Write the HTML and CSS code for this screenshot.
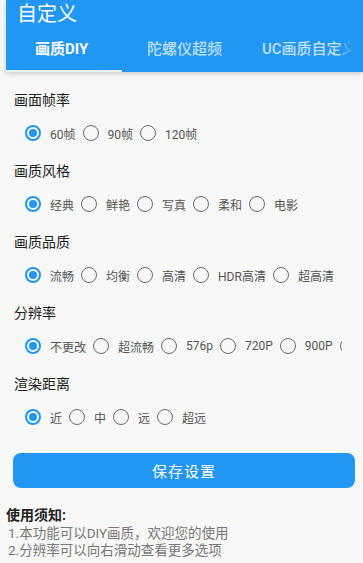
FILE: index.html
```html
<!DOCTYPE html>
<html lang="zh-CN">
<head>
    <meta charset="UTF-8">
    <meta name="viewport" content="width=device-width, initial-scale=1.0">
    <title>自定义</title>
    <link rel="stylesheet" href="styles.css">
</head>
<body>
    <div class="app-header">
        <div class="app-title">自定义</div>
        <div class="tab-bar">
            <div class="tab tab-active">画质DIY</div>
            <div class="tab">陀螺仪超频</div>
            <div class="tab tab-last">UC画质自定义</div>
            <div class="tab-fade"></div>
        </div>
    </div>

    <div class="settings">
        <div class="section">
            <div class="section-title">画面帧率</div>
            <div class="radio-row">
                <label class="radio-item"><span class="radio checked"></span>60帧</label>
                <label class="radio-item"><span class="radio"></span>90帧</label>
                <label class="radio-item"><span class="radio"></span>120帧</label>
            </div>
        </div>
        <div class="section">
            <div class="section-title">画质风格</div>
            <div class="radio-row">
                <label class="radio-item"><span class="radio checked"></span>经典</label>
                <label class="radio-item"><span class="radio"></span>鲜艳</label>
                <label class="radio-item"><span class="radio"></span>写真</label>
                <label class="radio-item"><span class="radio"></span>柔和</label>
                <label class="radio-item"><span class="radio"></span>电影</label>
            </div>
        </div>
        <div class="section">
            <div class="section-title">画质品质</div>
            <div class="radio-row">
                <label class="radio-item"><span class="radio checked"></span>流畅</label>
                <label class="radio-item"><span class="radio"></span>均衡</label>
                <label class="radio-item"><span class="radio"></span>高清</label>
                <label class="radio-item"><span class="radio"></span>HDR高清</label>
                <label class="radio-item"><span class="radio"></span>超高清</label>
            </div>
        </div>
        <div class="section">
            <div class="section-title">分辨率</div>
            <div class="radio-row radio-scroll">
                <label class="radio-item"><span class="radio checked"></span>不更改</label>
                <label class="radio-item"><span class="radio"></span>超流畅</label>
                <label class="radio-item"><span class="radio"></span>576p</label>
                <label class="radio-item"><span class="radio"></span>720P</label>
                <label class="radio-item"><span class="radio"></span>900P</label>
                <!-- next option is scrolled out of view, only its button edge shows -->
                <label class="radio-item"><span class="radio"></span></label>
            </div>
        </div>
        <div class="section">
            <div class="section-title">渲染距离</div>
            <div class="radio-row">
                <label class="radio-item"><span class="radio checked"></span>近</label>
                <label class="radio-item"><span class="radio"></span>中</label>
                <label class="radio-item"><span class="radio"></span>远</label>
                <label class="radio-item"><span class="radio"></span>超远</label>
            </div>
        </div>

        <button class="save-button">保存设置</button>
    </div>

    <div class="notice">
        <div class="notice-title">使用须知:</div>
        <p>1.本功能可以DIY画质，欢迎您的使用</p>
        <p>2.分辨率可以向右滑动查看更多选项</p>
    </div>
</body>
</html>
```

FILE: styles.css
```css
body {
    margin: 0;
    font-family: Roboto, "Noto Sans CJK SC", sans-serif;
    background-color: #f8f8f8;
    width: 363px;
    height: 563px;
    overflow: hidden;
}

.app-header {
    margin-left: 6px;
    height: 72px;
    background: #2196f3;
    box-shadow: 0 2px 5px rgba(0,0,0,0.18);
    position: relative;
}

.app-title {
    height: 28px;
    line-height: 28px;
    padding-left: 11px;
    font-size: 20px;
    color: white;
}

.tab-bar {
    display: flex;
    height: 44px;
    position: relative;
    overflow: hidden;
}

.tab {
    flex: none;
    box-sizing: border-box;
    width: 115px;
    padding-left: 25px;
    line-height: 42px;
    font-size: 15px;
    font-weight: 500;
    color: rgba(255,255,255,0.72);
    white-space: nowrap;
}

.tab-active {
    width: 116px;
    padding-left: 29px;
    color: white;
    font-weight: bold;
    border-bottom: 2px solid #e3f2fd;
}

.tab-last {
    width: auto;
}

.tab-fade {
    position: absolute;
    right: 0;
    top: 0;
    width: 22px;
    height: 42px;
    background: linear-gradient(to right, rgba(33,150,243,0.3), #2196f3 55%);
}

.settings {
    padding: 18px 8px 0 14px;
}

.section {
    margin-bottom: 16px;
}

.section-title {
    font-size: 14px;
    line-height: 20px;
    color: #222;
    margin-bottom: 11px;
}

.radio-row {
    display: flex;
    align-items: center;
    height: 24px;
    padding-left: 11px;
}

.radio-scroll {
    overflow: hidden;
    margin-right: 13px;
}

.radio-item {
    flex: none;
    display: flex;
    align-items: center;
    gap: 9px;
    margin-right: 7px;
    font-size: 12px;
    color: #555;
    white-space: nowrap;
}

.radio {
    box-sizing: border-box;
    width: 16px;
    height: 16px;
    border: 1.5px solid #6b6b6b;
    border-radius: 50%;
    position: relative;
}

.radio.checked {
    border: 2px solid #2196f3;
}

.radio.checked::after {
    content: "";
    position: absolute;
    left: 2px;
    top: 2px;
    width: 8px;
    height: 8px;
    border-radius: 50%;
    background: #2196f3;
}

.save-button {
    display: block;
    width: calc(100% + 1px);
    margin-left: -1px;
    margin-top: 24px;
    height: 35px;
    border: none;
    border-radius: 8px;
    background: #2196f3;
    color: white;
    font-family: inherit;
    font-size: 15px;
    letter-spacing: 1px;
}

.notice {
    padding: 17px 6px 0;
}

.notice-title {
    font-size: 14px;
    font-weight: bold;
    color: #222;
    line-height: 20px;
}

.notice p {
    margin: 0;
    padding-left: 2px;
    font-size: 13.5px;
    line-height: 17px;
    color: #777;
}
```
